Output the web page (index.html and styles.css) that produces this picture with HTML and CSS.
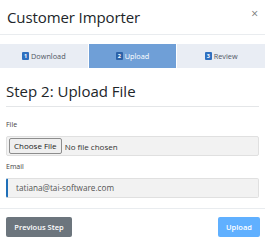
FILE: index.html
```html
<!DOCTYPE html>
<html>
<head>
<meta charset="utf-8">
<link rel="stylesheet" href="styles.css">
</head>
<body>
<div class="modal">
  <div class="header">
    <h1 class="title">Customer Importer</h1>
    <span class="close">&times;</span>
  </div>
  <div class="tabs">
    <div class="tab"><span class="badge">1</span>Download</div>
    <div class="tab active"><span class="badge">2</span>Upload</div>
    <div class="tab"><span class="badge">3</span>Review</div>
  </div>
  <div class="body">
    <h2 class="step">Step 2: Upload File</h2>
    <label class="label">File</label>
    <div class="filebox"><span class="choose">Choose File</span><span class="nofile">No file chosen</span></div>
    <label class="label">Email</label>
    <div class="email">tatiana@tai-software.com</div>
  </div>
  <div class="footer">
    <button class="btn prev">Previous Step</button>
    <button class="btn upload">Upload</button>
  </div>
</div>
</body>
</html>
```
FILE: styles.css
```css
* { box-sizing: border-box; }
html, body { margin: 0; padding: 0; background: #fff; }
body { font-family: "Open Sans", "Noto Sans", sans-serif; color: #212529; width: 265px; height: 240px; overflow: hidden; }
.modal { width: 265px; }
.header { display: flex; justify-content: space-between; align-items: flex-start; padding: 5px 7px 0 7px; height: 35px; border-bottom: 1px solid #e9ecef; }
.title { margin: 0; font-size: 15px; font-weight: 400; line-height: 24px; letter-spacing: -0.1px; }
.close { font-size: 12px; color: #777; line-height: 12px; margin-top: 3px; margin-right: 0; }
.tabs { display: flex; gap: 1px; margin-top: 9px; height: 24px; }
.tab { flex: 1; background: #e9edf4; color: #4f5663; font-size: 7.3px; display: flex; align-items: center; justify-content: center; gap: 2px; }
.tab.active { background: #6f9fd7; color: #fff; }
.badge { display: inline-block; width: 7px; height: 8px; border-radius: 1px; background: #2f70c0; color: #fff; font-size: 5.5px; line-height: 8px; text-align: center; font-weight: 700; }
.tab.active .badge { background: #2c62a8; }
.body { padding: 0 6px; }
.step { margin: 0; padding-top: 13px; height: 39px; font-size: 15px; font-weight: 400; line-height: 20px; border-bottom: 1px solid #e4e6e8; }
.label { display: block; font-size: 7px; color: #444; line-height: 10px; margin-top: 13px; }
.filebox { margin-top: 6px; height: 20px; background: #f2f2f2; border: 1px solid #e0e0e0; border-radius: 2px; display: flex; align-items: center; padding-left: 2px; font-size: 8px; }
.choose { border: 1px solid #8d8d8d; background: #efefef; border-radius: 2px; height: 16px; line-height: 14px; padding: 0 4px; color: #222; }
.nofile { margin-left: 3px; color: #333; }
.filebox + .label { margin-top: 6px; }
.email { margin-top: 6px; height: 20px; background: #f2f2f2; border: 1px solid #e0e0e0; border-left: 2px solid #1f6fb8; border-radius: 2px; font-size: 8.2px; line-height: 18px; padding-left: 8px; color: #555; }
.footer { margin-top: 10px; border-top: 1px solid #e9ecef; display: flex; justify-content: space-between; align-items: flex-start; padding: 8px 5px 0 6px; }
.btn { border: 0; border-radius: 2px; font-family: inherit; font-size: 7.5px; font-weight: 600; height: 20px; color: #fff; padding: 0; white-space: nowrap; }
.prev { background: #6c757d; width: 66px; }
.upload { background: #60b0ff; width: 42px; }
```
